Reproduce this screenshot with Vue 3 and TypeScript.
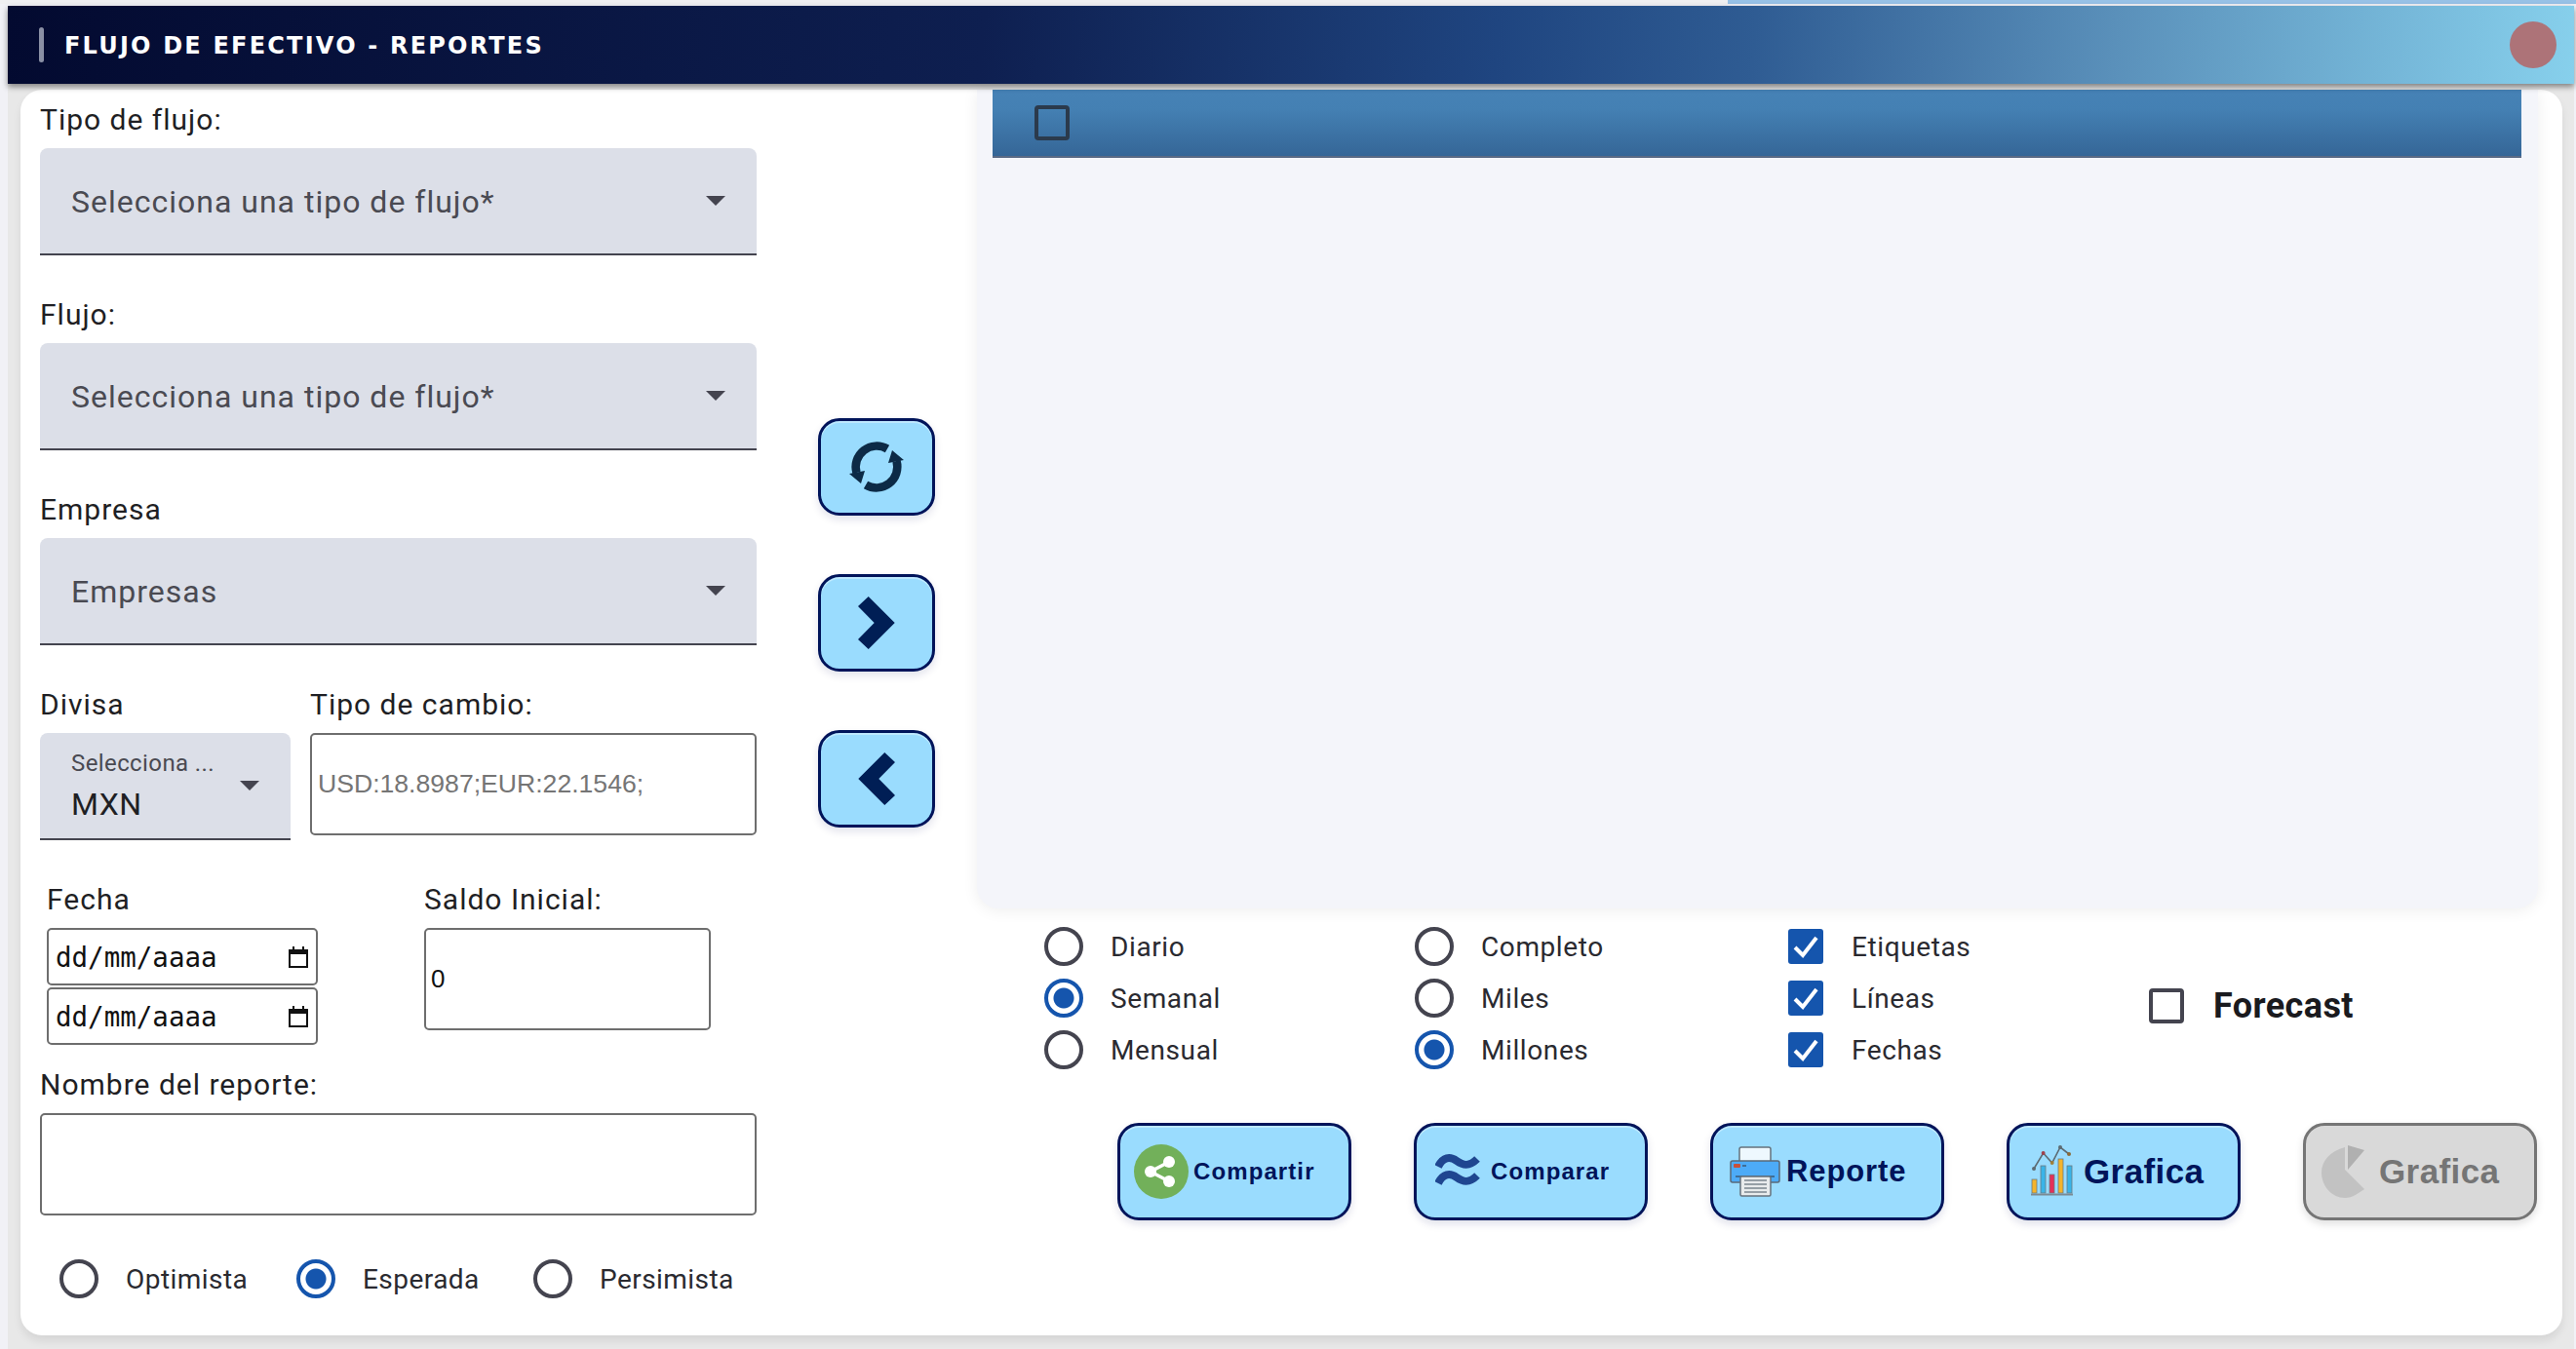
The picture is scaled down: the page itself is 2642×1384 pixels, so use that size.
<script setup lang="ts">
interface RadioItem { label: string; on: boolean }
const scenarios: RadioItem[] = [
  { label: 'Optimista', on: false },
  { label: 'Esperada', on: true },
  { label: 'Persimista', on: false },
]
const periods: RadioItem[] = [
  { label: 'Diario', on: false },
  { label: 'Semanal', on: true },
  { label: 'Mensual', on: false },
]
const units: RadioItem[] = [
  { label: 'Completo', on: false },
  { label: 'Miles', on: false },
  { label: 'Millones', on: true },
]
const checks: string[] = ['Etiquetas', 'Líneas', 'Fechas']
const selects: { label: string; text: string }[] = [
  { label: 'Tipo de flujo:', text: 'Selecciona una tipo de flujo*' },
  { label: 'Flujo:', text: 'Selecciona una tipo de flujo*' },
  { label: 'Empresa', text: 'Empresas' },
]
</script>

<template>
  <div class="page">
    <div class="strip"><div class="strip-l"></div><div class="strip-r"></div></div>
    <div class="app">
      <header class="head">
        <span class="head-bar"></span>
        <span class="head-title">FLUJO DE EFECTIVO - REPORTES</span>
        <span class="avatar"></span>
      </header>
      <main class="card">
        <section class="left">
          <div v-for="s in selects" :key="s.label" class="field">
            <div class="label">{{ s.label }}</div>
            <div class="select">
              <span class="select-text">{{ s.text }}</span>
              <span class="caret"></span>
            </div>
          </div>
          <div class="row-divisa">
            <div class="divisa">
              <div class="label">Divisa</div>
              <div class="select select-small">
                <div class="small-stack">
                  <span class="small-label">Selecciona ...</span>
                  <span class="small-value">MXN</span>
                </div>
                <span class="caret"></span>
              </div>
            </div>
            <div class="cambio">
              <div class="label">Tipo de cambio:</div>
              <div class="box box-cambio">USD:18.8987;EUR:22.1546;</div>
            </div>
          </div>
          <div class="row-fecha">
            <div class="fecha">
              <div class="label">Fecha</div>
              <div v-for="n in 2" :key="n" class="box date">
                <span>dd/mm/aaaa</span>
                <svg class="cal" viewBox="0 0 20 22" width="20" height="22">
                  <path d="M1 4h18v17H1z" fill="none" stroke="#111" stroke-width="2" />
                  <path d="M1 3h18v5H1z" fill="#111" />
                  <path d="M5 0v3M15 0v3" stroke="#111" stroke-width="2" />
                </svg>
              </div>
            </div>
            <div class="saldo">
              <div class="label">Saldo Inicial:</div>
              <div class="box box-saldo">0</div>
            </div>
          </div>
          <div class="nombre">
            <div class="label">Nombre del reporte:</div>
            <div class="box box-nombre"></div>
          </div>
          <div class="scenarios">
            <div v-for="r in scenarios" :key="r.label" class="opt scenario">
              <span class="radio" :class="{ on: r.on }"></span>
              <span class="opt-text">{{ r.label }}</span>
            </div>
          </div>
        </section>

        <section class="mid">
          <button class="btn nav">
            <svg viewBox="0 0 60 60" width="60" height="60">
              <path d="M41 11.5A21.5 21.5 0 0 0 9.5 36M19 48.5A21.5 21.5 0 0 0 50.5 24" fill="none" stroke="#0c2a46" stroke-width="8.5" />
              <path d="M2 37l16-3-4 13zM58 23l-16 3 4-13z" fill="#0c2a46" />
            </svg>
          </button>
          <button class="btn nav">
            <svg viewBox="0 0 38 54" width="38" height="54"><path d="M10.7 0L37.7 27 10.7 54 0 44 16.7 27 0 10z" fill="#001e55" /></svg>
          </button>
          <button class="btn nav">
            <svg viewBox="0 0 38 54" width="38" height="54"><path d="M27.3 0L.3 27l27 27L38 44 21.3 27 38 10z" fill="#001e55" /></svg>
          </button>
        </section>

        <section class="right">
          <div class="panel">
            <div class="panel-bar"><span class="bar-check"></span></div>
          </div>
          <div class="options">
            <div class="opt-col col-period">
              <div v-for="r in periods" :key="r.label" class="opt">
                <span class="radio" :class="{ on: r.on }"></span>
                <span class="opt-text">{{ r.label }}</span>
              </div>
            </div>
            <div class="opt-col col-unit">
              <div v-for="r in units" :key="r.label" class="opt">
                <span class="radio" :class="{ on: r.on }"></span>
                <span class="opt-text">{{ r.label }}</span>
              </div>
            </div>
            <div class="opt-col col-check">
              <div v-for="c in checks" :key="c" class="opt opt-check">
                <span class="check">
                  <svg viewBox="0 0 36 36" width="36" height="36"><path d="M7 19l8 8L29 9" fill="none" stroke="#fff" stroke-width="4" /></svg>
                </span>
                <span class="opt-text">{{ c }}</span>
              </div>
            </div>
            <div class="forecast">
              <span class="check-empty"></span>
              <span class="forecast-text">Forecast</span>
            </div>
          </div>
          <div class="actions">
            <button class="btn act act-share">
              <svg viewBox="0 0 56 56" width="56" height="56">
                <circle cx="28" cy="28" r="28" fill="#72b05a" />
                <path d="M36 18L17 28l19 10" fill="none" stroke="#fff" stroke-width="3.5" />
                <circle cx="17" cy="28" r="6" fill="#fff" /><circle cx="36" cy="18" r="6" fill="#fff" /><circle cx="36" cy="38" r="6" fill="#fff" />
              </svg>
              <span class="t24">Compartir</span>
            </button>
            <button class="btn act act-compare">
              <svg viewBox="0 0 48 36" width="48" height="36">
                <path d="M3 13C8 3 15 2 22 7s13 6 21-2M3 30c5-10 12-11 19-6s13 6 21-2" fill="none" stroke="#1f4690" stroke-width="8" />
              </svg>
              <span class="t24">Comparar</span>
            </button>
            <button class="btn act act-report">
              <svg viewBox="0 0 52 52" width="52" height="52">
                <rect x="10" y="1" width="32" height="24" rx="2" fill="#eef8fe" stroke="#66727c" stroke-width="1.5" />
                <rect x="1" y="15" width="50" height="22" rx="2" fill="#4dabf7" stroke="#5a6a78" stroke-width="1.5" />
                <rect x="4" y="18" width="7" height="4" rx="1" fill="#c8503a" />
                <path d="M13 20h4" stroke="#3a5a78" stroke-width="1.5" />
                <path d="M6 31h40" stroke="#3a5a78" stroke-width="1.5" />
                <rect x="11" y="31" width="31" height="20" rx="1.5" fill="#e8ebec" stroke="#66727c" stroke-width="1.5" />
                <path d="M15 35h23M15 39h23M15 43h23M15 47h23" stroke="#7b878f" stroke-width="1.6" />
              </svg>
              <span class="t31">Reporte</span>
            </button>
            <button class="btn act act-chart">
              <svg viewBox="0 0 44 54" width="44" height="54">
                <path d="M3 24l9.6-16L21.7 18 30 2l9 7" fill="none" stroke="#5d6b73" stroke-width="1.6" />
                <circle cx="3" cy="24" r="2" fill="#5d6b73" /><circle cx="12.6" cy="8" r="2" fill="#a0404a" /><circle cx="21.7" cy="18" r="2" fill="#a0803a" /><circle cx="30" cy="2" r="2" fill="#5d6b73" /><circle cx="39" cy="9" r="2" fill="#8a6a3a" />
                <rect x="1" y="35" width="5" height="14" fill="#f4b42c" stroke="#6b7a80" stroke-width=".8" />
                <rect x="10" y="21" width="5" height="28" fill="#3ab4e8" stroke="#6b7a80" stroke-width=".8" />
                <rect x="19" y="30" width="5" height="19" fill="#e4305a" stroke="#6b7a80" stroke-width=".8" />
                <rect x="28" y="14" width="5" height="35" fill="#f4b42c" stroke="#6b7a80" stroke-width=".8" />
                <rect x="37" y="21" width="5" height="28" fill="#3ab4e8" stroke="#6b7a80" stroke-width=".8" />
                <path d="M0 50.5h43" stroke="#7b8a94" stroke-width="2" />
              </svg>
              <span class="t35">Grafica</span>
            </button>
            <button class="btn act act-off">
              <svg viewBox="0 0 46 54" width="46" height="54">
                <path d="M24 2C9 6 0 16 0 28c0 14 11 26 24 26 8 0 14-5 20-9L24 25z" fill="#c2c2c2" />
                <path d="M27 0l17 5-17 20z" fill="#b0b0b0" />
              </svg>
              <span class="t35">Grafica</span>
            </button>
          </div>
        </section>
      </main>
    </div>
  </div>
</template>

<style>
html, body { margin: 0; background: #f1f1f6; }
</style>

<style scoped>
.page { width: 2642px; height: 1384px; overflow: hidden; font-family: Roboto, sans-serif; }
.strip { display: flex; height: 4px; margin-bottom: 2px; }
.strip-l { width: 1772px; background: #efeff1; }
.strip-r { flex: 1; background: #97c1e6; }
.app { margin-left: 8px; width: 2632px; height: 1378px; background: #e8e8e8; }
.head {
  height: 80px; display: flex; align-items: center; padding: 0 18px 0 32px; box-sizing: border-box;
  background: linear-gradient(95deg, #030a30 0%, #0e1f50 38%, #1f4580 58%, #2f5c93 68%, #5a90ba 82%, #87d0ec 100%);
  box-shadow: 0 3px 6px rgba(0, 0, 0, .45); position: relative;
}
.head-bar { width: 5px; height: 36px; border-radius: 3px; background: #8a90a5; }
.head-title { margin-left: 21px; padding-top: 2px; color: #fff; font: 700 24px "DejaVu Sans", sans-serif; letter-spacing: 2.2px; }
.avatar { margin-left: auto; width: 48px; height: 48px; border-radius: 50%; background: #ad7378; }

.card {
  margin: 6px 0 0 13px; width: 2607px; height: 1278px; background: #fff; border-radius: 22px;
  display: flex; box-shadow: 0 6px 8px rgba(0, 0, 0, .08);
}
.left { width: 735px; margin-left: 20px; padding-top: 14px; flex: none; }
.label { height: 34px; line-height: 34px; margin-bottom: 12px; font-size: 30px; color: #1f1f24; letter-spacing: 1px; white-space: nowrap; }
.field { margin-bottom: 44px; }
.select {
  height: 110px; box-sizing: border-box; display: flex; align-items: center; justify-content: space-between;
  padding: 0 32px 0 32px; background: #dcdfe8; border-radius: 8px 8px 0 0; border-bottom: 2.5px solid #44444f;
}
.select-text { font-size: 32px; padding-top: 2px; color: #4a4a52; letter-spacing: 1px; }
.caret { width: 0; height: 0; border-left: 10px solid transparent; border-right: 10px solid transparent; border-top: 10px solid #44444f; }
.row-divisa { display: flex; gap: 20px; }
.divisa { width: 257px; }
.cambio { width: 458px; }
.small-stack { display: flex; flex-direction: column; }
.small-label { font-size: 24px; line-height: 30px; padding-top: 2px; color: #4a4a52; letter-spacing: .4px; }
.small-value { font-size: 32px; line-height: 42px; margin-top: 6px; color: #1f1f24; letter-spacing: .5px; }
.box { box-sizing: border-box; border: 2.5px solid #6e6e6e; border-radius: 5px; background: #fff; }
.box-cambio { height: 105px; display: flex; align-items: center; padding-left: 6px; font: 26.6px "Liberation Sans", sans-serif; color: #757575; }
.row-fecha { display: flex; margin: 44px 0 0 7px; }
.fecha { width: 278px; margin-right: 109px; }
.date {
  height: 59px; margin-bottom: 2px; display: flex; align-items: center; justify-content: space-between;
  padding: 0 8px 0 7px; font: 27.5px "DejaVu Sans Mono", monospace; color: #111;
}
.saldo { width: 294px; }
.box-saldo { height: 105px; display: flex; align-items: center; padding-left: 5px; font: 26px "Liberation Sans", sans-serif; color: #111; }
.nombre { margin-top: 22px; }
.box-nombre { height: 105px; }
.scenarios { display: flex; margin: 45px 0 0 20px; }
.scenario { width: 243px; flex: none; }
.scenario .opt-text { letter-spacing: .45px; }
.opt { display: flex; align-items: center; height: 40px; gap: 28px; }
.opt-text { font-size: 28px; color: #2a2a30; letter-spacing: .6px; white-space: nowrap; }
.radio { width: 40px; height: 40px; box-sizing: border-box; flex: none; border-radius: 50%; border: 4px solid #44444f; background: #fff; }
.radio.on { border-color: #1555ad; background: radial-gradient(circle, #1555ad 0 10px, #fff 11px); }

.mid { flex: none; width: 120px; margin-left: 63px; padding-top: 337px; display: flex; flex-direction: column; gap: 60px; }
.btn {
  box-sizing: border-box; height: 100px; padding: 0; background: #9adcfe; border: 3.5px solid #00145a; border-radius: 22px;
  box-shadow: 0 4px 8px rgba(0, 20, 90, .12), inset 0 2px 0 rgba(255, 255, 255, .35); display: flex; align-items: center;
  font-family: "Liberation Sans", sans-serif; font-weight: 700; color: #00145a;
}
.nav { width: 120px; justify-content: center; }

.right { flex: none; width: 1601px; margin-left: 43px; }
.panel {
  height: 840px; background: #f4f5fa; border-radius: 0 0 22px 22px; padding: 0 17px 0 16px; box-sizing: border-box;
  box-shadow: 0 2px 16px rgba(0, 0, 0, .07);
}
.panel-bar {
  height: 70px; box-sizing: border-box; display: flex; align-items: center; padding-left: 43px;
  background: linear-gradient(180deg, #4682b6 0%, #4480b3 30%, #356697 100%); border-bottom: 2px solid #5a6a85;
}
.bar-check { width: 36px; height: 36px; box-sizing: border-box; border: 4px solid #2b3a4c; border-radius: 4px; }
.options { display: flex; margin: 19px 0 0 69px; }
.opt-col { display: flex; flex-direction: column; gap: 13px; }
.col-period { width: 380px; }
.col-unit { width: 383px; }
.col-check { width: 370px; }
.opt-check { gap: 29px; }
.check { width: 36px; height: 36px; flex: none; border-radius: 3px; background: #1555ad; display: flex; }
.forecast { display: flex; align-items: center; gap: 30px; height: 36px; margin-top: 63px; }
.check-empty { width: 36px; height: 36px; box-sizing: border-box; border: 4px solid #44444f; border-radius: 4px; }
.forecast-text { font-size: 36px; font-weight: 700; color: #1a1a1e; letter-spacing: .4px; }
.actions { display: flex; gap: 64px; margin: 55px 0 0 144px; }
.act { width: 240px; }
.t24 { font-size: 24px; letter-spacing: 1.1px; }
.t31 { font-size: 31px; letter-spacing: .9px; }
.t35 { font-size: 35px; letter-spacing: .4px; }
.act-share { padding-left: 14px; gap: 5px; }
.act-compare { padding-left: 19px; gap: 9px; }
.act-report { padding-left: 17px; gap: 6px; }
.act-chart { padding-left: 22px; gap: 10px; }
.act-off { padding-left: 16px; gap: 13px; background: #d9d9d9; border-color: #757575; color: #757575; box-shadow: 0 4px 8px rgba(0,0,0,.12); }
</style>
